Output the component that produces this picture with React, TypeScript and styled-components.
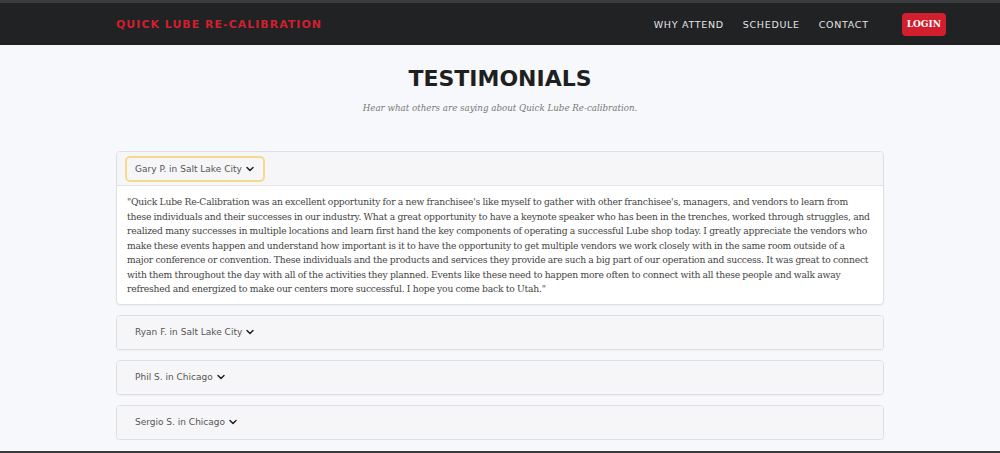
import React, { useState } from 'react';
import styled, { createGlobalStyle } from 'styled-components';
import { ChevronDown } from 'lucide-react';

const GlobalStyle = createGlobalStyle`
    html, body {
        margin: 0;
        padding: 0;
        background: #f7f8fb;
    }
    body::after {
        content: '';
        position: fixed;
        left: 0;
        right: 0;
        bottom: 0;
        height: 2px;
        background: #3a3b3d;
    }
`;

const headFont = `'DejaVu Sans', 'Open Sans', sans-serif`;
const bodyFont = `'DejaVu Serif', 'Liberation Serif', serif`;

const Nav = styled.nav`
    height: 42px;
    border-top: 3px solid #3b3c3e;
    background: #212224;
    display: flex;
    align-items: center;
    padding: 0 54px 0 116px;
`;

const Brand = styled.a`
    font-family: ${headFont};
    font-weight: 700;
    font-size: 11px;
    letter-spacing: 1px;
    color: #d0202f;
    text-decoration: none;
`;

const Links = styled.div`
    margin-left: auto;
    display: flex;
    align-items: center;
`;

const NavLink = styled.a`
    font-family: ${headFont};
    font-size: 9.5px;
    letter-spacing: 0.7px;
    color: #e4e4e4;
    text-decoration: none;
    margin-right: 19px;
`;

const LoginButton = styled.button`
    margin-left: 14px;
    height: 23px;
    padding: 0 5px;
    border: none;
    border-radius: 4px;
    background: #d21f2e;
    color: #fff;
    font-family: ${bodyFont};
    font-weight: 700;
    font-size: 9px;
`;

const Main = styled.main`
    width: 768px;
    margin: 0 auto;
    padding-top: 19px;
`;

const Title = styled.h2`
    margin: 0;
    text-align: center;
    font-family: ${headFont};
    font-weight: 700;
    font-size: 22px;
    color: #1f1f1f;
    line-height: 30px;
`;

const Subtitle = styled.p`
    margin: 9px 0 38px;
    text-align: center;
    font-family: ${bodyFont};
    font-style: italic;
    font-size: 8.7px;
    color: #777;
`;

const List = styled.div`
    display: flex;
    flex-direction: column;
    gap: 10px;
`;

const Item = styled.div`
    border: 1px solid #dedfe2;
    border-radius: 4px;
    background: #fff;
    box-shadow: 0 1px 1px rgba(0, 0, 0, 0.04);
    overflow: hidden;
`;

const Header = styled.div<{ $open: boolean }>`
    height: 33px;
    display: flex;
    align-items: center;
    padding: 0 8px;
    background: #f6f6f8;
    border-bottom: ${(p) => (p.$open ? '1px solid #e3e3e6' : 'none')};
`;

const Toggle = styled.button<{ $focus: boolean }>`
    display: flex;
    align-items: center;
    gap: 2px;
    height: 26px;
    padding: 0 7px 0 8px;
    border: 2px solid ${(p) => (p.$focus ? '#f7d98a' : 'transparent')};
    border-radius: 5px;
    background: transparent;
    font-family: ${headFont};
    font-size: 9px;
    color: #555;
    cursor: pointer;
`;

const Body = styled.div`
    padding: 9px 10px 7px;
    font-family: ${bodyFont};
    font-size: 9.2px;
    letter-spacing: -0.2px;
    word-spacing: -0.3px;
    line-height: 14.5px;
    color: #444;
`;

const people = [
    'Gary P. in Salt Lake City',
    'Ryan F. in Salt Lake City',
    'Phil S. in Chicago',
    'Sergio S. in Chicago',
];

const garyText =
    '"Quick Lube Re-Calibration was an excellent opportunity for a new franchisee\'s like myself to gather with other franchisee\'s, managers, and vendors to learn from these individuals and their successes in our industry. What a great opportunity to have a keynote speaker who has been in the trenches, worked through struggles, and realized many successes in multiple locations and learn first hand the key components of operating a successful Lube shop today. I greatly appreciate the vendors who make these events happen and understand how important is it to have the opportunity to get multiple vendors we work closely with in the same room outside of a major conference or convention. These individuals and the products and services they provide are such a big part of our operation and success. It was great to connect with them throughout the day with all of the activities they planned. Events like these need to happen more often to connect with all these people and walk away refreshed and energized to make our centers more successful. I hope you come back to Utah."';

const App = () => {
    const [open, setOpen] = useState<number>(0);

    return (
        <>
            <GlobalStyle />
            <Nav>
                <Brand href="#">QUICK LUBE RE-CALIBRATION</Brand>
                <Links>
                    <NavLink href="#">WHY ATTEND</NavLink>
                    <NavLink href="#">SCHEDULE</NavLink>
                    <NavLink href="#">CONTACT</NavLink>
                    <LoginButton>LOGIN</LoginButton>
                </Links>
            </Nav>
            <Main>
                <Title>TESTIMONIALS</Title>
                <Subtitle>Hear what others are saying about Quick Lube Re-calibration.</Subtitle>
                <List>
                    {people.map((name, i) => (
                        <Item key={name}>
                            <Header $open={open === i}>
                                <Toggle $focus={open === i} onClick={() => setOpen(open === i ? -1 : i)}>
                                    {name}
                                    <ChevronDown size={12} strokeWidth={3} color="#222" />
                                </Toggle>
                            </Header>
                            {open === i && <Body>{i === 0 ? garyText : ''}</Body>}
                        </Item>
                    ))}
                </List>
            </Main>
        </>
    );
};

export default App;
